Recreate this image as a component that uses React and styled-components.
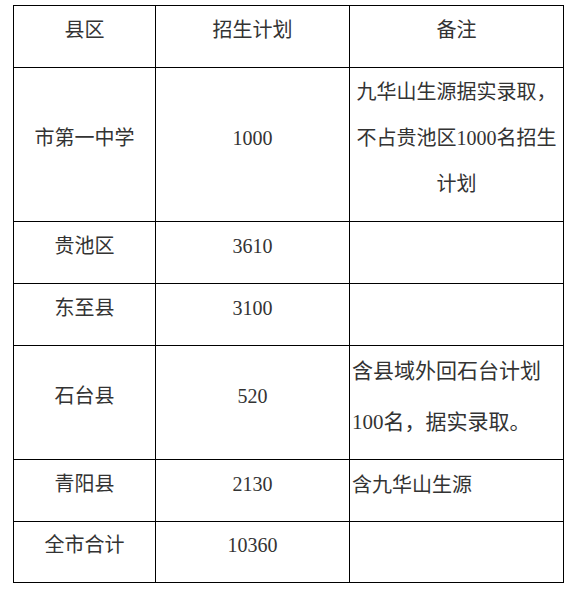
import React from "react";
import styled, { createGlobalStyle } from "styled-components";

const GlobalStyle = createGlobalStyle`
  html, body {
    margin: 0;
    padding: 0;
    background: #fff;
  }
`;

const Page = styled.div`
  padding: 5px 12px 0 13px;
  font-family: "Liberation Serif", "Noto Sans CJK SC", serif;
  color: #333;
`;

const Table = styled.table`
  width: 550px;
  border-collapse: collapse;
  table-layout: fixed;
  font-size: 20px;
`;

const Row = styled.tr`
  height: ${({ $h }) => $h}px;
`;

const Cell = styled.td`
  border: 1px solid #000;
  text-align: center;
  vertical-align: middle;
  padding: 0 0 14px;
  line-height: 46px;
  overflow: hidden;
`;

const Note = styled.td`
  border: 1px solid #000;
  text-align: ${({ $align }) => $align || "left"};
  vertical-align: top;
  padding: ${({ $pt }) => $pt ?? 1}px 6px 0 ${({ $align }) => ($align === "center" ? 6 : 2)}px;
  line-height: ${({ $lh }) => $lh || 46}px;
  font-size: ${({ $fs }) => $fs || 20}px;
`;

const rows = [
  { area: "市第一中学", plan: "1000", h: 154, note: "九华山生源据实录取，不占贵池区1000名招生计划", align: "center" },
  { area: "贵池区", plan: "3610", h: 62 },
  { area: "东至县", plan: "3100", h: 62 },
  { area: "石台县", plan: "520", h: 114, note: "含县域外回石台计划100名，据实录取。", lh: 51, pt: 0, fs: 21 },
  { area: "青阳县", plan: "2130", h: 62, note: "含九华山生源", lh: 48, pt: 1 },
  { area: "全市合计", plan: "10360", h: 61 },
];

export default function App() {
  return (
    <Page>
      <GlobalStyle />
      <Table>
        <colgroup>
          <col style={{ width: 142 }} />
          <col style={{ width: 194 }} />
          <col style={{ width: 214 }} />
        </colgroup>
        <tbody>
          <Row $h={62}>
            <Cell>县区</Cell>
            <Cell>招生计划</Cell>
            <Cell>备注</Cell>
          </Row>
          {rows.map((r) => (
            <Row key={r.area} $h={r.h}>
              <Cell>{r.area}</Cell>
              <Cell>{r.plan}</Cell>
              <Note $align={r.align} $lh={r.lh} $pt={r.pt} $fs={r.fs}>
                {r.note}
              </Note>
            </Row>
          ))}
        </tbody>
      </Table>
    </Page>
  );
}
